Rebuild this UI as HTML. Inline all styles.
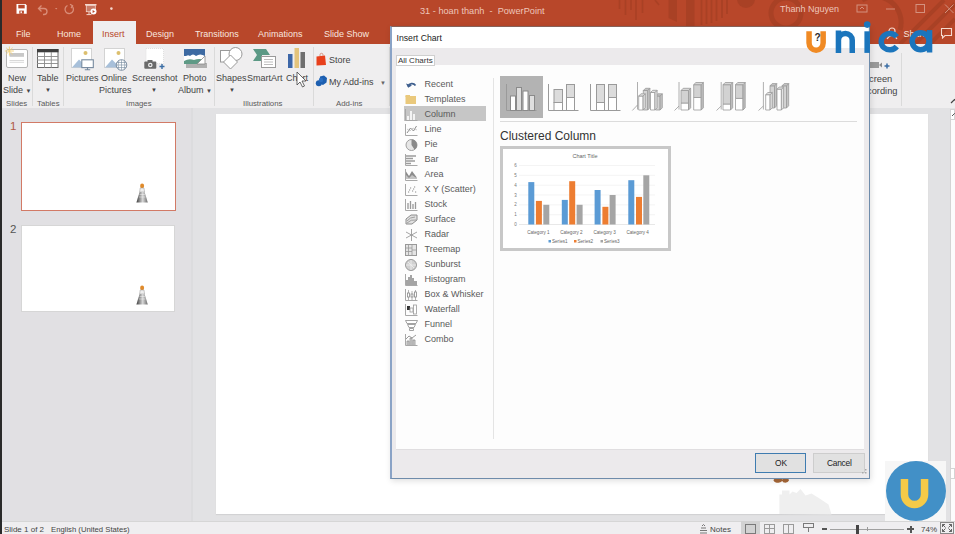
<!DOCTYPE html>
<html><head><meta charset="utf-8">
<style>
*{box-sizing:border-box;margin:0;padding:0}
html,body{width:955px;height:534px;overflow:hidden;background:#e3e3e3;font-family:"Liberation Sans",sans-serif;color:#444}
.a{position:absolute}
.t{position:absolute;white-space:nowrap;line-height:1}
.tab{position:absolute;top:30px;font-size:9px;color:#f9e6df;white-space:nowrap;line-height:1}
.rl{position:absolute;font-size:9px;color:#444;white-space:nowrap;line-height:1}
.gl{position:absolute;top:99.7px;font-size:7.8px;color:#5a5a5a;white-space:nowrap;line-height:1}
.sep{position:absolute;top:47px;width:1px;height:59px;background:#dadada}
.st{position:absolute;top:526px;font-size:8px;color:#444;white-space:nowrap;line-height:1}
.ci{position:absolute;left:33px;font-size:9px;color:#5a5a5a;margin-left:.5px;margin-top:.4px;white-space:nowrap;line-height:1}
.ic{position:absolute;left:13px}
</style></head><body>
<!-- base areas -->
<div class="a" style="left:0;top:0;width:955px;height:44px;background:#b8472a"></div>
<div class="a" style="left:0;top:44px;width:955px;height:64px;background:#efeeef"></div>
<div class="a" style="left:0;top:108px;width:192px;height:413px;background:#e1e0e3"></div>
<div class="a" style="left:192px;top:108px;width:763px;height:413px;background:#e2e2e4"></div>
<div class="a" style="left:191px;top:108px;width:2px;height:413px;background:#dcdcde"></div>
<div class="a" style="left:0;top:521px;width:955px;height:13px;background:#efeef0;border-top:1px solid #d6d6d6"></div>
<div class="a" style="left:216px;top:114px;width:712px;height:400px;background:#fff;box-shadow:0 1px 1px #d2d2d4"></div>
<div class="a" style="left:950px;top:110px;width:5px;height:411px;background:#fcfcfc;border-left:1px solid #d4d4d4"></div><div class="a" style="left:950px;top:109px;width:5px;height:11px;background:#fff;border:1px solid #d4d4d4"></div><div class="a" style="left:950px;top:468px;width:5px;height:11px;background:#fff;border:1px solid #d4d4d4"></div><svg class="a" style="left:951px;top:112px" width="6" height="5"><path d="M1 4l2.5 -2.5l2.5 2.5" fill="none" stroke="#555"/></svg>
<div class="a" style="left:0;top:0;width:2px;height:534px;background:#2a2a2a;z-index:50"></div>

<!-- title bar pattern -->
<svg class="a" style="left:0;top:0" width="955" height="44">
  <g stroke="#a53f24" fill="none" opacity=".75">
    <path d="M619.5 0v9M625.5 0v15M631 0v10M636 0v20M642.5 0v13" stroke-width="1.6"/>
    <path d="M655 0l4 5" stroke-width="1.6"/>
    <path d="M668.5 0h8.5v22l-8.5 -4z" fill="#a53f24" stroke="none"/>
    <path d="M686 0h8.5v44h-8.5z" fill="#a53f24" stroke="none"/>
    <path d="M701.5 0v25M706.5 0v24M711.5 0v23M716.5 0v21M722 0v18M727 0v14" stroke-width="1.8"/>
    <circle cx="746" cy="-1" r="9" fill="#a53f24" stroke="none"/>
    <circle cx="786" cy="13" r="15" stroke-width="5"/>
    <path d="M862 0 A26 26 0 0 1 900 30" stroke-width="5"/>
    <path d="M900 44 L944 0 M915 44 L955 4 M930 44 L955 19" stroke-width="4"/>
  </g>
</svg>
<!-- QAT -->
<svg class="a" style="left:0;top:0" width="130" height="18">
  <path d="M16.5 4h9l1.2 1.2v8.6h-10.2z" fill="#fff"/><rect x="18.3" y="4.8" width="6.4" height="3.6" fill="#b8472a"/><rect x="19.3" y="10.6" width="4.6" height="3.2" fill="#b8472a"/><rect x="20.5" y="11.3" width="1.4" height="1.8" fill="#fff"/>
  <path d="M41.5 5.5 l-3 3 l3 3 M38.5 8.5 h5.5 a3 3 0 0 1 0 6 h-1" stroke="#d98d78" stroke-width="1.3" fill="none"/>
  <path d="M55 8h2.4l-1.2 1.4z" fill="#d98d78"/>
  <path d="M71.5 5.8 a4.2 4.2 0 1 1 -4 -0.3" stroke="#d98d78" stroke-width="1.3" fill="none"/><path d="M70 4.2 l2.6 1.6 l-1.6 2.4" stroke="#d98d78" stroke-width="1.2" fill="none"/>
  <rect x="85" y="4" width="11.5" height="1.5" fill="#f3d6cc"/><rect x="86.3" y="5.5" width="9" height="6.2" fill="#c97a66" stroke="#f3d6cc" stroke-width=".8"/>
  <circle cx="93.5" cy="11.5" r="3" fill="#fff"/><path d="M92.6 10v3l2.4 -1.5z" fill="#b8472a"/><path d="M89 12v2.2M86.5 14.6h5" stroke="#f3d6cc" stroke-width="1"/>
  <circle cx="111.4" cy="8.6" r="1.3" fill="#f3d6cc"/>
</svg>
<div class="t" style="left:420px;top:6.5px;font-size:9.2px;color:#eec6ba">31 - hoan thanh&nbsp; - &nbsp;PowerPoint</div>
<div class="t" style="left:780px;top:4.5px;font-size:9px;color:#eec6ba">Thanh Nguyen</div>
<svg class="a" style="left:855px;top:3px" width="100" height="12">
  <rect x="2" y="2" width="10" height="7" fill="none" stroke="#d4917e"/><path d="M5 6l2 -2l2 2" stroke="#d4917e" fill="none"/>
  <path d="M31 6h9" stroke="#d4917e"/>
  <rect x="61" y="1.5" width="8.5" height="8" fill="none" stroke="#d4917e"/>
  <path d="M90 1.5l8.5 8.5M98.5 1.5l-8.5 8.5" stroke="#d4917e"/>
</svg>
<!-- tabs -->
<div class="tab" style="left:16px">File</div>
<div class="tab" style="left:57px">Home</div>
<div class="a" style="left:93px;top:21px;width:43px;height:23px;background:#efeeef"></div>
<div class="tab" style="left:102px;color:#b8472a">Insert</div>
<div class="tab" style="left:146px">Design</div>
<div class="tab" style="left:195px">Transitions</div>
<div class="tab" style="left:258px">Animations</div>
<div class="tab" style="left:324px">Slide Show</div>
<svg class="a" style="left:886px;top:26px" width="14" height="14"><circle cx="6" cy="5" r="3" fill="none" stroke="#f3d6cc" stroke-width="1.2"/><path d="M1 13 q5 -7 10 0" fill="none" stroke="#f3d6cc" stroke-width="1.2"/></svg>
<div class="tab" style="left:903.5px;top:30px">Share</div>
<svg class="a" style="left:940px;top:27px" width="14" height="12"><path d="M1.5 1.5h10v7h-6.5l-2.5 2.5v-2.5h-1z" fill="none" stroke="#f6d9cf" stroke-width="1.1"/></svg>

<!-- ribbon separators -->
<div class="sep" style="left:32px"></div>
<div class="sep" style="left:63px"></div>
<div class="sep" style="left:214px"></div>
<div class="sep" style="left:313px"></div>
<div class="sep" style="left:389px"></div>
<div class="sep" style="left:901px;top:53px;height:53px"></div>

<!-- New slide -->
<svg class="a" style="left:4px;top:46px" width="26" height="23">
  <rect x="2.5" y="3.5" width="21" height="18" rx="1.5" fill="#fff" stroke="#b4b4b4"/><rect x="5.5" y="7" width="14.5" height="3.8" fill="#c8c8c8"/><path d="M5.5 14.5h14.5M5.5 16.3h14.5" stroke="#cfcfcf" stroke-width=".8"/>
  <path d="M5.4 0.5v9M0.9 5h9M2.2 1.8l6.4 6.4M8.6 1.8l-6.4 6.4" stroke="#f0cf78" stroke-width=".9"/>
</svg>
<div class="rl" style="left:8px;top:74px">New</div>
<div class="rl" style="left:3px;top:86px">Slide <span style="font-size:6px">▼</span></div>
<div class="gl" style="left:6px">Slides</div>
<!-- Table -->
<svg class="a" style="left:37px;top:49px" width="22" height="19">
  <rect x="0.5" y="0.5" width="20.5" height="18" fill="#fff" stroke="#6a6a6a"/><rect x="0" y="0" width="21.5" height="3.3" fill="#3e3e3e"/>
  <path d="M0 7.5h21M0 11h21M0 14.5h21M7.5 3v16M14.3 3v16" stroke="#8a8a8a" stroke-width=".9"/>
</svg>
<div class="rl" style="left:37px;top:74px">Table</div>
<div class="rl" style="left:45px;top:87px;font-size:6px">▼</div>
<div class="gl" style="left:37px">Tables</div>
<!-- Pictures -->
<svg class="a" style="left:70px;top:47px" width="26" height="25">
  <rect x="1.5" y="1.5" width="20" height="19" fill="#fff" stroke="#d3d3d3"/><circle cx="15.5" cy="6" r="2" fill="#dcbf6e"/>
  <path d="M2 20.5 l7 -8 l6 6 v2 z" fill="#a8c0da"/>
  <rect x="11.8" y="12.8" width="11.5" height="7.8" fill="#fff" stroke="#76899e" stroke-width="1.1"/><path d="M17.5 20.6v1.8M14.8 22.8h5.4" stroke="#76899e" stroke-width="1.1"/>
</svg>
<div class="rl" style="left:66px;top:74px">Pictures</div>
<!-- Online pictures -->
<svg class="a" style="left:103px;top:47px" width="26" height="25">
  <rect x="1.5" y="1.5" width="20" height="19" fill="#fff" stroke="#d3d3d3"/><circle cx="15.5" cy="6" r="2" fill="#dcbf6e"/>
  <path d="M2 20.5 l7 -8 l6 6 v2 z" fill="#a8c0da"/>
  <circle cx="18.5" cy="18" r="5.3" fill="#fff" stroke="#76899e" stroke-width=".9"/><path d="M13.2 18h10.6M18.5 12.7v10.6M13.8 15.5h9.4M13.8 20.5h9.4M16 13.2q-1.8 4.8 0 9.6M21 13.2q1.8 4.8 0 9.6" stroke="#76899e" fill="none" stroke-width=".6"/>
</svg>
<div class="rl" style="left:101px;top:74px">Online</div>
<div class="rl" style="left:99px;top:86px">Pictures</div>
<!-- Screenshot -->
<svg class="a" style="left:143px;top:48px" width="24" height="22">
  <rect x="3" y="0.5" width="17.5" height="15" fill="#fff" stroke="#e0e0e0" stroke-dasharray="1 1"/>
  <rect x="1.3" y="13.5" width="12" height="7.3" rx="1" fill="#6a6a6a"/><rect x="4.5" y="12" width="5" height="2" fill="#6a6a6a"/><circle cx="7.3" cy="17" r="2.3" fill="#eee"/><circle cx="7.3" cy="17" r="1.1" fill="#6a6a6a"/>
  <path d="M19 16v5M16.5 18.5h5" stroke="#3b6ea5" stroke-width="1.4"/>
</svg>
<div class="rl" style="left:132px;top:74px">Screenshot</div>
<div class="rl" style="left:151px;top:87px;font-size:6px">▼</div>
<div class="gl" style="left:126px">Images</div>
<!-- Photo album -->
<svg class="a" style="left:183px;top:48px" width="26" height="21">
  <rect x="3" y="15" width="21" height="5" fill="#b0b0b0"/>
  <rect x="1" y="1" width="21" height="15" fill="#fff"/>
  <rect x="1" y="1" width="21" height="7" fill="#3d6aa2"/>
  <path d="M1 10 q3 -4 6 -2 q3 -3 6 0 q4 -3 9 0 v3 h-21z" fill="#fff"/>
  <path d="M1 13 q5 -3 10 -1 q5 -2 11 0 v4 h-21z" fill="#5f9a86"/>
  <path d="M14 16 l8 -8 v8z" fill="#fff" stroke="#8a8a8a" stroke-width=".8"/>
</svg>
<div class="rl" style="left:183px;top:74px">Photo</div>
<div class="rl" style="left:178px;top:86px">Album <span style="font-size:6px">▼</span></div>
<!-- Shapes -->
<svg class="a" style="left:219px;top:46px" width="25" height="25">
  <rect x="1.5" y="4.5" width="11.5" height="11.5" fill="#fff" stroke="#999"/><circle cx="16.5" cy="8" r="6.5" fill="#fff" stroke="#999"/>
  <path d="M11.5 9 l7 7 l-7 7 l-7 -7z" fill="#fff" stroke="#999"/>
</svg>
<div class="rl" style="left:216px;top:74px">Shapes</div>
<div class="rl" style="left:229px;top:87px;font-size:6px">▼</div>
<!-- SmartArt -->
<svg class="a" style="left:253px;top:49px" width="24" height="19">
  <path d="M0 0h13l4 6h-13z" fill="#5b9985"/><path d="M0 12l4 -6h5v6z" fill="#5b9985"/>
  <rect x="8.5" y="7.5" width="14" height="11" fill="#fff" stroke="#9a9a9a"/><path d="M11 10.5h9M11 13h9M11 15.5h9" stroke="#bdbdbd"/>
</svg>
<div class="rl" style="left:247px;top:74px">SmartArt</div>
<!-- Chart -->
<svg class="a" style="left:287px;top:48px" width="20" height="21">
  <rect x="1" y="6" width="4.5" height="14" fill="#3d67a8"/><rect x="7.5" y="0" width="4.5" height="20" fill="#e4c47c"/><rect x="13.5" y="4" width="4.5" height="16" fill="#6f6f6f"/>
</svg>
<div class="rl" style="left:286px;top:74px">Chart</div>
<svg class="a" style="left:296px;top:71px" width="12" height="17"><path d="M1 1v13l3 -3l2.5 5l2 -1l-2.5 -5h4z" fill="#fff" stroke="#444" stroke-width=".8"/></svg>
<div class="gl" style="left:243px">Illustrations</div>
<!-- Store / Add-ins -->
<svg class="a" style="left:315px;top:52px" width="13" height="14"><path d="M1.5 4.5l8.5 -1l1 9.5l-9.5 .5z" fill="#e8401c"/><path d="M5 4v-1.2a1.5 1.5 0 0 1 3 0v1" fill="none" stroke="#d0806a" stroke-width=".8"/></svg>
<div class="rl" style="left:329px;top:56px">Store</div>
<svg class="a" style="left:315px;top:75px" width="13" height="12"><path d="M5 1.5l4 -1l3 2.5l-.5 4.5l-3.5 2.5l-3.5 -1.5z" fill="#1d5fb0"/><circle cx="3.8" cy="8.2" r="3" fill="#1d5fb0"/><circle cx="6" cy="5" r="2.2" fill="#2a6fc2"/></svg>
<div class="rl" style="left:329px;top:78px">My Add-ins</div><div class="rl" style="left:380px;top:80px;font-size:6px;color:#666">▼</div>
<div class="gl" style="left:336px">Add-ins</div>
<!-- Screen recording -->
<svg class="a" style="left:868px;top:57px" width="30" height="14"><rect x="2" y="5" width="9" height="6" fill="#9a9a9a"/><path d="M11 8l3 -2.5v5z" fill="#8c8c8c"/><path d="M19 6.5v5M16.5 9h5" stroke="#3b6ea5" stroke-width="1.5"/></svg>
<div class="rl" style="left:869px;top:74.7px;font-size:9.3px">creen</div>
<div class="rl" style="left:867px;top:86.7px;font-size:9.3px">cording</div>
<svg class="a" style="left:950px;top:98px" width="9" height="7"><path d="M1 5l3.5 -3.5l3.5 3.5" fill="none" stroke="#444" stroke-width="1.2"/></svg>

<!-- thumbnails -->
<div class="t" style="left:10px;top:121px;font-size:11.5px;color:#b05a46">1</div>
<div class="a" style="left:21px;top:122px;width:155px;height:89px;background:#fff;border:1.5px solid #d27a66"></div>
<div class="t" style="left:10px;top:224px;font-size:11.5px;color:#555">2</div>
<div class="a" style="left:21px;top:225px;width:154px;height:87px;background:#fff;border:1px solid #d6d6d6"></div>
<svg class="a" style="left:130px;top:180px" width="25" height="26">
<defs><linearGradient id="lg184" x1="0" x2="1"><stop offset="0" stop-color="#3c3c3c"/><stop offset=".55" stop-color="#d8d8d8"/><stop offset="1" stop-color="#6a6a6a"/></linearGradient></defs>
<ellipse cx="12.1" cy="6" rx="2" ry="2.4" fill="#e08a2a"/>
<path d="M10.2 8h3.8l.6 4h-5z" fill="#eee" stroke="#999" stroke-width=".5"/>
<path d="M9.6 12h5l3.2 10.5h-11.4z" fill="url(#lg184)"/>
<path d="M9.5 14.5h5.4M8.8 17h6.8" stroke="#fff" stroke-width=".6" opacity=".7"/>
</svg>
<svg class="a" style="left:130px;top:282px" width="25" height="26">
<defs><linearGradient id="lg286" x1="0" x2="1"><stop offset="0" stop-color="#3c3c3c"/><stop offset=".55" stop-color="#d8d8d8"/><stop offset="1" stop-color="#6a6a6a"/></linearGradient></defs>
<ellipse cx="12.1" cy="6" rx="2" ry="2.4" fill="#e08a2a"/>
<path d="M10.2 8h3.8l.6 4h-5z" fill="#eee" stroke="#999" stroke-width=".5"/>
<path d="M9.6 12h5l3.2 10.5h-11.4z" fill="url(#lg286)"/>
<path d="M9.5 14.5h5.4M8.8 17h6.8" stroke="#fff" stroke-width=".6" opacity=".7"/>
</svg>

<!-- ghost lighthouse on slide -->
<svg class="a" style="left:0;top:0" width="955" height="534"><path d="M779.4 514V494.5h2.6v-4h7.5v4l3 -3l4 1.5l4 -4l5 6.5l6 -2l8 5l9 6l3 10z" fill="#efefef"/><path d="M773.5 480.5q0 -2 3 -2h3q3 0 3 2q-1 2 -4 2.3q-4 0 -5 -2.3zM782 480.5q0 -2 3 -2h2q2 0 2 2q-1 2 -3.5 2.3q-3 0 -3.5 -2.3z" fill="#a86838"/></svg>

<!-- status bar -->
<div class="st" style="left:4px">Slide 1 of 2</div>
<div class="st" style="left:51px;font-size:7.7px">English (United States)</div>
<svg class="a" style="left:699px;top:524px" width="9" height="10"><path d="M2 4h5M1 6.5h7M1 9h7" stroke="#777"/><path d="M3 2l1.5 -1.5l1.5 1.5" fill="none" stroke="#777"/></svg>
<div class="st" style="left:710px">Notes</div>
<div class="a" style="left:741px;top:521px;width:19px;height:13px;background:#d2d2d2"></div>
<div class="a" style="left:745px;top:524px;width:11px;height:10px;border:1px solid #7a7a7a"></div>
<div class="a" style="left:764px;top:524px;width:11px;height:10px;border:1px solid #9a9a9a"></div>
<div class="a" style="left:769px;top:524px;width:1px;height:10px;background:#9a9a9a"></div>
<div class="a" style="left:764px;top:528px;width:11px;height:1px;background:#9a9a9a"></div>
<div class="a" style="left:783px;top:524px;width:11px;height:10px;border:1px solid #9a9a9a"></div>
<div class="a" style="left:788px;top:524px;width:1px;height:10px;background:#9a9a9a"></div>
<div class="a" style="left:803px;top:523px;width:11px;height:5px;border:1px solid #7a7a7a"></div>
<div class="a" style="left:808px;top:528px;width:1px;height:4px;background:#7a7a7a"></div>
<div class="a" style="left:822px;top:528px;width:5px;height:2px;background:#555"></div>
<div class="a" style="left:830px;top:529px;width:74px;height:1px;background:#a0a0a0"></div>
<div class="a" style="left:856px;top:525px;width:3px;height:9px;background:#444"></div>
<div class="a" style="left:867px;top:527px;width:1px;height:4px;background:#999"></div>
<div class="a" style="left:907px;top:528px;width:7px;height:2px;background:#555"></div>
<div class="a" style="left:909.5px;top:525.5px;width:2px;height:7px;background:#555"></div>
<div class="st" style="left:921px">74%</div>
<svg class="a" style="left:940px;top:522px" width="15" height="12"><rect x="0.5" y="0.5" width="13" height="11" fill="none" stroke="#888"/><path d="M2.5 2.5l3 3M11.5 2.5l-3 3M2.5 9.5l3 -3M11.5 9.5l-3 -3M2.5 2.5h2.5M2.5 2.5v2.5M11.5 2.5h-2.5M11.5 2.5v2.5M2.5 9.5h2.5M2.5 9.5v-2.5M11.5 9.5h-2.5M11.5 9.5v-2.5" stroke="#555" stroke-width=".9"/></svg>

<!-- DIALOG -->
<div class="a" style="left:390px;top:26px;width:480px;height:453px;background:#eceaec;border:1px solid #6f8cab;border-top-color:#86625a;border-left:2px solid #8aa3c6;box-shadow:1px 2px 6px rgba(0,0,0,.13)">
  <div class="a" style="left:0;top:0;width:476px;height:21px;background:#fff"></div>
  <div class="t" style="left:4.5px;top:7px;font-size:8.7px;color:#222">Insert Chart</div>
  <div class="a" style="left:4px;top:28px;width:39px;height:11px;background:#fff;border:1px solid #cfcfcf;z-index:2"></div>
  <div class="t" style="left:6px;top:30px;font-size:8px;color:#333;z-index:3">All Charts</div>
  <div class="a" style="left:4px;top:38px;width:468px;height:385px;background:#fdfdfd;border-bottom:1px solid #e0dee0"></div>
  <div class="a" style="left:101px;top:51px;width:1px;height:361px;background:#e4e4e4"></div>
</div>
<!-- dialog content (page coords) -->
<div class="a" style="left:404px;top:106px;width:82px;height:15px;background:#c6c6c6"></div>
<div class="ci" style="left:424px;top:80px">Recent</div>
<div class="ci" style="left:424px;top:95px">Templates</div>
<div class="ci" style="left:424px;top:110px">Column</div>
<div class="ci" style="left:424px;top:125px">Line</div>
<div class="ci" style="left:424px;top:140px">Pie</div>
<div class="ci" style="left:424px;top:155px">Bar</div>
<div class="ci" style="left:424px;top:170px">Area</div>
<div class="ci" style="left:424px;top:185px">X Y (Scatter)</div>
<div class="ci" style="left:424px;top:200px">Stock</div>
<div class="ci" style="left:424px;top:215px">Surface</div>
<div class="ci" style="left:424px;top:230px">Radar</div>
<div class="ci" style="left:424px;top:245px">Treemap</div>
<div class="ci" style="left:424px;top:260px">Sunburst</div>
<div class="ci" style="left:424px;top:275px">Histogram</div>
<div class="ci" style="left:424px;top:290px">Box &amp; Whisker</div>
<div class="ci" style="left:424px;top:305px">Waterfall</div>
<div class="ci" style="left:424px;top:320px">Funnel</div>
<div class="ci" style="left:424px;top:335px">Combo</div>
<!-- list icons -->
<svg class="a" style="left:0;top:0" width="955" height="534">
<g transform="translate(405 79)"><path d="M3 7.5 A4.2 4.2 0 0 1 10.5 6.5" fill="none" stroke="#3e5f8e" stroke-width="1.6"/><path d="M1 4.5 l2.2 4.2 l3.8 -2.2z" fill="#3e5f8e"/></g>
<g transform="translate(405 94)"><rect x="0.5" y="2" width="10.5" height="8" fill="#eac97c"/><rect x="0.5" y="1" width="4.5" height="2" fill="#eac97c"/></g>
<g transform="translate(405 109)"><path d="M0.5 0v11.5h12" stroke="#a8a8a8" fill="none"/><path d="M3 11v-4M6 11v-9M9 11v-6" stroke="#f4f4f4" stroke-width="2"/></g>
<g transform="translate(405 124)"><path d="M0.5 0v11.5h12" stroke="#a8a8a8" fill="none"/><path d="M2 9 l3.5 -5 l3 3 l3 -5" fill="none" stroke="#8c8c8c" stroke-width="1"/><path d="M2 5 l3 2 l3 -3 l4 2" fill="none" stroke="#c0c0c0" stroke-width=".8"/></g>
<g transform="translate(405 139)"><circle cx="6.5" cy="6" r="5.5" fill="#e6e6e6" stroke="#a0a0a0"/><path d="M6.5 6V0.5A5.5 5.5 0 0 1 9.5 10.6z" fill="#8a8a8a"/></g>
<g transform="translate(405 154)"><path d="M0.5 0v11.5h12" stroke="#a8a8a8" fill="none"/><path d="M1 2h10M1 4.5h7M1 7h9M1 9.5h5" stroke="#9c9c9c" stroke-width="1.5"/></g>
<g transform="translate(405 169)"><path d="M0.5 0v11.5h12" stroke="#a8a8a8" fill="none"/><path d="M1 10 V2.5 l3 4.5 l3 -5 l4.5 6 v2z" fill="#8c8c8c"/><path d="M1 10 V6 l3 3 l3 -3 l4.5 3 v1z" fill="#c4c4c4"/></g>
<g transform="translate(405 184)"><path d="M0.5 0v11.5h12" stroke="#a8a8a8" fill="none"/><path d="M3 8h1.2M5 4h1.2M7 7h1.2M9 3h1.2M4 6h1.2M10 8h1.2M8 5h1.2" stroke="#8a8a8a" stroke-width="1.2"/></g>
<g transform="translate(405 199)"><path d="M0.5 0v11.5h12" stroke="#a8a8a8" fill="none"/><path d="M3 10v-6M5.5 10v-8M8 10v-5M10.5 10v-7" stroke="#999" stroke-width="1.3"/></g>
<g transform="translate(405 214)"><path d="M1 5 l5 -4 h6 v5 l-5 4 h-6z" fill="#e0e0e0" stroke="#8e8e8e"/><path d="M2 7 q3 -4 8 -4 M2 9 q4 -4 9 -3" fill="none" stroke="#8e8e8e" stroke-width=".8"/></g>
<g transform="translate(405 229)"><path d="M6.5 0v12M1 3l11 6M12 3l-11 6" stroke="#9a9a9a" stroke-width=".9"/></g>
<g transform="translate(405 244)"><rect x="0.5" y="0.5" width="11" height="11" fill="#e4e4e4" stroke="#999"/><path d="M7 0.5v11M0.5 4h6.5M0.5 7.5h6.5M3.5 0.5v11M7 6h4.5" stroke="#999" stroke-width=".8"/></g>
<g transform="translate(405 259)"><circle cx="6" cy="6" r="5.5" fill="#d0d0d0" stroke="#9a9a9a"/><path d="M3 3l6 6M6 1v10M1 6h10" stroke="#f0f0f0" stroke-width=".8"/></g>
<g transform="translate(405 274)"><path d="M0.5 0v11.5h12" stroke="#a8a8a8" fill="none"/><path d="M1 11v-5h2v-3h2v-2h2v3h2v3h3v4z" fill="#a4a4a4"/></g>
<g transform="translate(405 289)"><path d="M0.5 0v11.5h12" stroke="#a8a8a8" fill="none"/><path d="M3.5 1v10M7 2v9M10.5 1v10" stroke="#a0a0a0" stroke-width=".8"/><rect x="2.5" y="4" width="2" height="4" fill="#fff" stroke="#888" stroke-width=".8"/><rect x="6" y="5" width="2" height="3" fill="#fff" stroke="#888" stroke-width=".8"/><rect x="9.5" y="3" width="2" height="5" fill="#fff" stroke="#888" stroke-width=".8"/></g>
<g transform="translate(405 304)"><path d="M0.5 0v11.5h12" stroke="#a8a8a8" fill="none"/><rect x="2" y="2" width="3" height="4" fill="#333"/><rect x="5" y="4" width="3" height="4" fill="#fff" stroke="#999" stroke-width=".8"/><rect x="8.5" y="1" width="3" height="9" fill="#fff" stroke="#999" stroke-width=".8"/></g>
<g transform="translate(405 319)"><path d="M0.5 1.5h12l-1.5 3h-9z M2.5 5.5h8l-1.5 3h-5z M4.5 9.5h4v2h-4z" fill="#fff" stroke="#999" stroke-width=".9"/></g>
<g transform="translate(405 334)"><path d="M0.5 0v11.5h12" stroke="#a8a8a8" fill="none"/><path d="M2 11v-4h2v4M5 11v-7h2v7M8 11v-5h2v5" fill="#d4d4d4" stroke="#8e8e8e" stroke-width=".8"/><path d="M1 5 l3 -3 l3 2 l4 -3" fill="none" stroke="#8e8e8e" stroke-width=".9"/></g>
</svg>
<!-- chart subtype tiles -->
<div class="a" style="left:500px;top:76px;width:43px;height:42px;background:#b3b3b3"></div>
<svg class="a" style="left:500px;top:76px" width="300" height="42">
  <g stroke="#8a8a8a" stroke-width="1" fill="#fff">
    <path d="M6.5 8v26.5h30" fill="none" stroke="#9a9a9a"/>
    <rect x="10.5" y="20" width="5" height="14.5"/><rect x="16.5" y="11.5" width="5" height="23" fill="#dedede"/><rect x="23" y="15" width="5" height="19.5"/><rect x="29.5" y="19.5" width="5" height="15" fill="#dedede"/>
  </g>
  <g stroke="#9a9a9a" stroke-width="1" fill="#fff">
    <path d="M48.5 8v26.5h30" fill="none"/>
    <rect x="54" y="26.5" width="8.5" height="8"/><rect x="54" y="13.5" width="8.5" height="13" fill="#dcdcdc"/>
    <rect x="66.5" y="21.5" width="8" height="13"/><rect x="66.5" y="8.5" width="8" height="13" fill="#dcdcdc"/>
    <path d="M90.5 8v26.5h30" fill="none"/>
    <rect x="96.5" y="26.5" width="8" height="8"/><rect x="96.5" y="8.5" width="8" height="18" fill="#dcdcdc"/>
    <rect x="108.5" y="21.5" width="8" height="13"/><rect x="108.5" y="8.5" width="8" height="13" fill="#dcdcdc"/>
  </g>
  
</svg>
<svg class="a" style="left:0;top:0" width="955" height="130"><g stroke="#9a9a9a" stroke-width=".8"><path d="M637.5 82V109.5M632.3 110.5L637.5 105" fill="none"/><path d="M643.3 110V90.5h4.4V110z" fill="#d4d4d4"/><path d="M647.6999999999999 110V90.5l2.2 -2.2V107.8z" fill="#c4c4c4"/><path d="M643.3 90.5l2.2 -2.2h4.4l-2.2 2.2z" fill="#c4c4c4"/><path d="M655.5 110V96h4.6V110z" fill="#d4d4d4"/><path d="M660.1 110V96l2.2 -2.2V107.8z" fill="#c4c4c4"/><path d="M655.5 96l2.2 -2.2h4.6l-2.2 2.2z" fill="#c4c4c4"/><path d="M638.7 110V96h4.4V110z" fill="#fff"/><path d="M643.1 110V96l2.2 -2.2V107.8z" fill="#e2e2e2"/><path d="M638.7 96l2.2 -2.2h4.4l-2.2 2.2z" fill="#e2e2e2"/><path d="M650.5 110V92.5h4.4V110z" fill="#fff"/><path d="M654.9 110V92.5l2.2 -2.2V107.8z" fill="#e2e2e2"/><path d="M650.5 92.5l2.2 -2.2h4.4l-2.2 2.2z" fill="#e2e2e2"/><path d="M679 82V109.5M674.5 110.5L679 106" fill="none"/><path d="M681 110V103h7.5V110z" fill="#fff"/><path d="M681 103V90.5h7.5V103z" fill="#d2d2d2"/><path d="M688.5 110V90.5l2.2 -2.2V107.8z" fill="#bdbdbd"/><path d="M681 90.5l2.2 -2.2h7.5l-2.2 2.2z" fill="#d8d8d8"/><path d="M693.7 110V97.5h7.5V110z" fill="#fff"/><path d="M693.7 97.5V84.7h7.5V97.5z" fill="#d2d2d2"/><path d="M701.2 110V84.7l2.2 -2.2V107.8z" fill="#bdbdbd"/><path d="M693.7 84.7l2.2 -2.2h7.5l-2.2 2.2z" fill="#d8d8d8"/><path d="M721.2 82V109.5M716.5 110.5L721.2 106" fill="none"/><path d="M723 110V104h7.5V110z" fill="#fff"/><path d="M723 104V84.7h7.5V104z" fill="#d2d2d2"/><path d="M730.5 110V84.7l2.2 -2.2V107.8z" fill="#bdbdbd"/><path d="M723 84.7l2.2 -2.2h7.5l-2.2 2.2z" fill="#d8d8d8"/><path d="M735.5 110V98.4h7.5V110z" fill="#fff"/><path d="M735.5 98.4V84.7h7.5V98.4z" fill="#d2d2d2"/><path d="M743.0 110V84.7l2.2 -2.2V107.8z" fill="#bdbdbd"/><path d="M735.5 84.7l2.2 -2.2h7.5l-2.2 2.2z" fill="#d8d8d8"/><path d="M763.4 82V109.5M758.5 110.5L763.4 106" fill="none"/><path d="M770 108V85.8h4.5V108z" fill="#d4d4d4"/><path d="M774.5 108V85.8l2.2 -2.2V105.8z" fill="#c4c4c4"/><path d="M770 85.8l2.2 -2.2h4.5l-2.2 2.2z" fill="#c4c4c4"/><path d="M782 108V85.8h4.5V108z" fill="#d4d4d4"/><path d="M786.5 108V85.8l2.2 -2.2V105.8z" fill="#c4c4c4"/><path d="M782 85.8l2.2 -2.2h4.5l-2.2 2.2z" fill="#c4c4c4"/><path d="M765.7 110V94.7h4.4V110z" fill="#fff"/><path d="M770.1 110V94.7l2.2 -2.2V107.8z" fill="#e2e2e2"/><path d="M765.7 94.7l2.2 -2.2h4.4l-2.2 2.2z" fill="#e2e2e2"/><path d="M777 110V89.2h4.4V110z" fill="#fff"/><path d="M781.4 110V89.2l2.2 -2.2V107.8z" fill="#e2e2e2"/><path d="M777 89.2l2.2 -2.2h4.4l-2.2 2.2z" fill="#e2e2e2"/></g></svg>
<div class="a" style="left:500px;top:121px;width:357px;height:1px;background:#dcdcdc"></div>
<div class="t" style="left:500px;top:129.5px;font-size:12px;color:#333">Clustered Column</div>

<!-- chart preview -->
<svg class="a" style="left:500px;top:146px" width="171" height="106" font-family="Liberation Sans">
  <rect x="1.5" y="1.5" width="168" height="102" fill="#fff" stroke="#c8c8c8" stroke-width="3"/>
  <text x="85" y="12" font-size="5.5" fill="#666" text-anchor="middle">Chart Title</text>
  <g stroke="#ececec" stroke-width=".6">
    <path d="M19 19.5h136M19 29.3h136M19 39.2h136M19 49h136M19 58.9h136M19 68.7h136"/>
  </g>
  <path d="M19 78.5h136" stroke="#d8d8d8" stroke-width=".6"/>
  <g font-size="4.5" fill="#777" text-anchor="middle">
    <text x="15.5" y="21">6</text><text x="15.5" y="30.8">5</text><text x="15.5" y="40.7">4</text><text x="15.5" y="50.5">3</text><text x="15.5" y="60.4">2</text><text x="15.5" y="70.2">1</text><text x="15.5" y="80">0</text>
  </g>
  <g fill="#5b9bd5"><rect x="28.3" y="36.1" width="6" height="42.4"/><rect x="61.8" y="53.9" width="6" height="24.6"/><rect x="94.6" y="44" width="6" height="34.5"/><rect x="128.3" y="34.2" width="6" height="44.3"/></g>
  <g fill="#ed7d31"><rect x="35.9" y="54.9" width="6" height="23.6"/><rect x="69.2" y="35.2" width="6" height="43.3"/><rect x="102.4" y="60.8" width="6" height="17.7"/><rect x="136" y="50.9" width="6" height="27.6"/></g>
  <g fill="#a5a5a5"><rect x="43.3" y="58.8" width="6" height="19.7"/><rect x="76.6" y="58.8" width="6" height="19.7"/><rect x="109.6" y="49" width="6" height="29.5"/><rect x="143.3" y="29.3" width="6" height="49.2"/></g>
  <g font-size="4.6" fill="#666" text-anchor="middle">
    <text x="38.4" y="87.8">Category 1</text><text x="71.4" y="87.8">Category 2</text><text x="104.7" y="87.8">Category 3</text><text x="137.7" y="87.8">Category 4</text>
  </g>
  <g font-size="4.6" fill="#666" font-family="Liberation Sans">
    <rect x="48.5" y="94" width="2.5" height="2.5" fill="#5b9bd5"/><text x="52" y="96.6">Series1</text>
    <rect x="74" y="94" width="2.5" height="2.5" fill="#ed7d31"/><text x="77.5" y="96.6">Series2</text>
    <rect x="100.5" y="94" width="2.5" height="2.5" fill="#a5a5a5"/><text x="104" y="96.6">Series3</text>
  </g>
</svg>

<!-- buttons -->
<div class="a" style="left:755px;top:453px;width:51px;height:20px;background:#e1e1e1;border:1px solid #3f7cb0"></div>
<div class="t" style="left:775px;top:459px;font-size:8.4px;color:#222">OK</div>
<div class="a" style="left:813px;top:453px;width:52px;height:20px;background:#e1e1e1;border:1px solid #cdcdcd"></div>
<div class="t" style="left:827px;top:459px;font-size:8.4px;letter-spacing:-.25px;color:#222">Cancel</div>
<svg class="a" style="left:861px;top:469px" width="7" height="7"><g fill="#aaa"><rect x="4" y="0" width="1.5" height="1.5"/><rect x="4" y="3" width="1.5" height="1.5"/><rect x="1" y="3" width="1.5" height="1.5"/></g></svg>

<!-- unica logo -->
<svg class="a" style="left:0;top:0" width="955" height="60">
  <g fill="none" stroke-width="5.5">
  <path d="M809.05 31.3V43.1A7.05 7.05 0 0 0 823.15 43.1V31.3" stroke="#f08a24"/>
  <path d="M838.45 30.5V52.9M838.45 52.9V40.3A6.9 6.9 0 0 1 852.25 40.3V52.9" stroke="#1b75bc"/>
  <path d="M867.15 31.3V52.9" stroke="#1b75bc"/>
  <path d="M896.76 36.91A8.6 8.15 0 1 0 896.76 46.49" stroke="#1b75bc"/>
  <circle cx="920.6" cy="41.3" r="8.45" stroke="#1b75bc"/>
  <path d="M929.55 30.1V52.5" stroke="#1b75bc"/>
  </g>
  <circle cx="867.2" cy="24.6" r="3.3" fill="#1b75bc"/>
</svg>
<div class="t" style="left:814.5px;top:33px;font-size:10px;font-weight:bold;color:#2a2a2a">?</div>
<!-- U circle logo -->
<div class="a" style="left:885px;top:461px;width:61px;height:60px;background:#f6f6f6"></div>
<div class="a" style="left:886px;top:461px;width:60px;height:60px;border-radius:50%;background:#4290c7"></div>
<svg class="a" style="left:886px;top:461px" width="60" height="60"><path d="M18.45 18.1V33.5A10.05 10.05 0 0 0 38.55 33.5V18.1" fill="none" stroke="#f5ca48" stroke-width="7.5"/></svg>
</body></html>
